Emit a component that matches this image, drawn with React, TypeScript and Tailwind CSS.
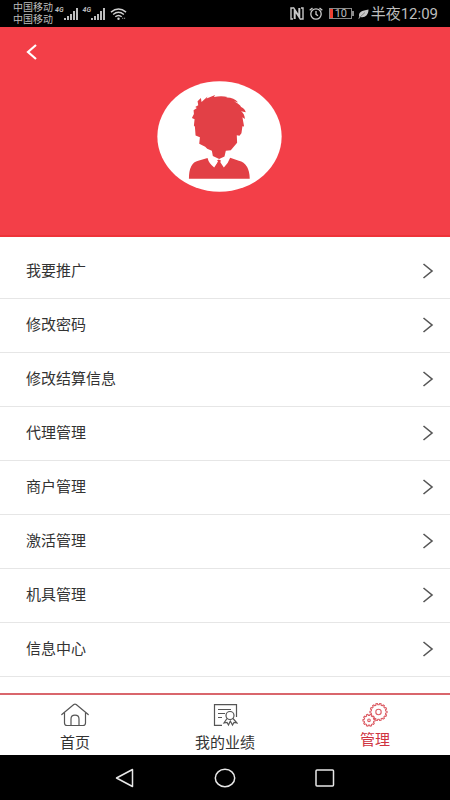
import React from "react";

const menuItems = [
  "我要推广",
  "修改密码",
  "修改结算信息",
  "代理管理",
  "商户管理",
  "激活管理",
  "机具管理",
  "信息中心",
];

function Signal() {
  return (
    <div className="flex items-start">
      <span className="text-[7px] leading-[9px] font-bold italic">4G</span>
      <svg width="15" height="16" viewBox="0 0 15 16" fill="currentColor" aria-hidden="true">
        <rect x="0" y="12" width="2" height="2" />
        <rect x="3" y="10" width="2" height="4" />
        <rect x="6" y="8" width="2" height="6" />
        <rect x="9" y="5" width="2" height="9" />
        <rect x="12" y="2" width="2" height="12" />
      </svg>
    </div>
  );
}

function WifiIcon() {
  return (
    <svg width="17" height="14" viewBox="0 0 18 14" fill="none" stroke="#d0d0d0" strokeWidth="1.5" aria-hidden="true">
      <path d="M1 5 Q9 -1.8 17 5" />
      <path d="M3.3 7.6 Q9 2.8 14.7 7.6" />
      <path d="M5.6 10 Q9 7 12.4 10" />
      <circle cx="9" cy="12" r="1.3" fill="#d0d0d0" stroke="none" />
      <path d="M13 11.5 h1 M15 11.5 h1" strokeWidth="1" />
    </svg>
  );
}

function NfcIcon() {
  return (
    <svg width="14" height="13" viewBox="0 0 14 13" fill="none" stroke="#c8c8c8" aria-hidden="true">
      <path d="M4 1 H1 V12 H3 M10 12 H13 V1 H11" strokeWidth="1.4" />
      <path d="M4.7 12 V3 L9.300 10 V1" strokeWidth="2" />
    </svg>
  );
}

function AlarmIcon() {
  return (
    <svg width="14" height="13" viewBox="0 0 14 13" fill="none" stroke="#cccccc" strokeWidth="1.3" aria-hidden="true">
      <circle cx="7" cy="7" r="5.200" />
      <path d="M7 4 V7.300 L9 8.700 M.7 3.300 L3.500 1 M10.500 1 L13.300 3.300" />
    </svg>
  );
}

function LeafIcon() {
  return (
    <svg width="11" height="10" viewBox="0 0 11 10" aria-hidden="true">
      <path d="M1.300 8 C0 3 4 1.500 10.500 .5 C10.500 6 7 9 2.500 8 L1 9.700 L.3 9.300 Z" fill="#c8c8c8" />
      <path d="M1.500 8.500 L7 3.500" stroke="#555" strokeWidth=".6" />
    </svg>
  );
}

function Avatar() {
  return (
    <svg width="125" height="111" viewBox="36 33 376 334" role="img" aria-label="头像">
      <ellipse cx="224" cy="200" rx="187" ry="166" fill="#fff" />
      <g fill="#e24046">
        <path d="M152 197 L150 171 L147 167 L149 148 L141 144 L147 132 L146 121 L156 114 L151 111 L160 106 L158 94 L168 84 L170 96 L188 80 L185 86 L211 75 L207 81 Q230 77 248 81 L243 83 Q267 82 280 98 L268 94 Q285 103 289 111 Q301 117 303 127 L289 124 Q300 132 300 147 L293 142 L298 170 L293 169 L290 190 L284 198 L276 196 L277 219 L263 235 L258 241 L243 243 L239 260 L223 268 L204 259 L201 243 L187 237 L181 231 L163 222 L165 202 Z" />
        <path d="M132 327 Q132 279 160 273 L188 265 Q192 282 208 293 L220 275 L216 273 L222 269 L229 273 L226 277 L237 293 Q251 280 256 264 L282 273 Q314 281 315 327 Z" />
        <path d="M218 278 H226 L230 292 H213 Z" />
      </g>
    </svg>
  );
}

function ChevronRight() {
  return (
    <svg width="12" height="18" viewBox="0 0 12 18" fill="none" stroke="#565656" strokeWidth="1.6" aria-hidden="true">
      <path d="M1.500 2 L10 9 L1.500 16" />
    </svg>
  );
}

function HomeIcon() {
  return (
    <svg width="28" height="24" viewBox="0 0 28 24" fill="none" stroke="#555" strokeWidth="1.2" strokeLinejoin="round" strokeLinecap="round" aria-hidden="true">
      <path d="M.8 11.500 L12.800 1.500 Q14 .7 15.200 1.500 L27.200 11.500" />
      <path d="M3.500 10 V20 Q3.500 22.500 6 22.500 H22 Q24.500 22.500 24.500 20 V10" />
      <path d="M10 22 V16 Q10 12.200 14 12.200 Q18 12.200 18 16 V22" />
    </svg>
  );
}

function CertificateIcon() {
  return (
    <svg width="26" height="24" viewBox="0 0 26 24" fill="none" stroke="#555" strokeWidth="1.2" aria-hidden="true">
      <path d="M10 22.400 H2.500 V1.600 H24.500 V14" />
      <path d="M6 6.500 H19 M6 10.500 H13 M6 14.500 H10" />
      <circle cx="18" cy="12.500" r="4" />
      <path d="M15 15.500 L12 20 L15 19.500 L16.500 22 L18.300 18 L20.500 22 L22 19.500 L25 20 L21 15.500" />
    </svg>
  );
}

function gearPath(cx: number, cy: number, r: number, depth: number, teeth: number) {
  const points: string[] = [];
  for (let i = 0; i < teeth; i++) {
    [-0.3, -0.2, 0.2, 0.3].forEach((offset, k) => {
      const angle = ((i + offset) / teeth) * Math.PI * 2;
      const radius = k === 0 || k === 3 ? r - depth : r;
      points.push(`${(cx + radius * Math.cos(angle)).toFixed(2)} ${(cy + radius * Math.sin(angle)).toFixed(2)}`);
    });
  }
  return `M${points.join("L")}Z`;
}

function GearsIcon() {
  return (
    <svg width="26" height="24" viewBox="0 0 26 24" fill="none" stroke="#dc5c64" strokeWidth="1.1" strokeLinejoin="round" aria-hidden="true">
      <path d={gearPath(16.5, 9, 8.6, 1.3, 14)} />
      <circle cx="16.500" cy="9" r="2.700" />
      <path d={gearPath(7, 17.3, 6.1, 1.2, 10)} fill="#fff" />
      <circle cx="7" cy="17.300" r="1.300" />
    </svg>
  );
}

function StatusBar() {
  return (
    <div className="flex h-[27px] items-center bg-black pr-3 pl-[13px] text-[#bdbdbd]">
      <div className="text-[10px] leading-[12px]">
        <div>中国移动</div>
        <div>中国移动</div>
      </div>
      <div className="ml-[2px] flex items-center gap-1">
        <Signal />
        <Signal />
        <WifiIcon />
      </div>
      <div className="ml-auto flex items-center">
        <NfcIcon />
        <span className="ml-[5px]"><AlarmIcon /></span>
        <div className="ml-[6px] flex items-center">
          <div className="flex h-[11px] w-[23px] items-center border border-[#8a8a8a]">
            <span className="h-full w-[3px] bg-[#f04030]" />
            <span className="ml-[2px] text-[11px] leading-[10px]">10</span>
          </div>
          <span className="h-[5px] w-[2px] bg-[#8a8a8a]" />
        </div>
        <span className="ml-[4px]"><LeafIcon /></span>
        <span className="ml-[2px] text-[15px] leading-[20px]">半夜12:09</span>
      </div>
    </div>
  );
}

export default function App() {
  return (
    <div className="flex min-h-screen flex-col bg-white font-[Roboto,'Noto_Sans_CJK_SC',sans-serif] text-[#333]">
      <StatusBar />

      <header className="flex h-[210px] flex-col items-center border-b-2 border-[#ee3339] bg-[#f33f48]">
        <button type="button" aria-label="返回" className="mt-4 ml-[25px] self-start">
          <svg width="14" height="18" viewBox="0 0 14 18" fill="none" stroke="#fff" strokeWidth="2.2">
            <path d="M11 2 L3 9 L11 16" />
          </svg>
        </button>
        <div className="mt-5 pr-3">
          <Avatar />
        </div>
      </header>

      <main className="flex-1 pt-2">
        <ul>
          {menuItems.map((label) => (
            <li key={label} className="border-b border-[#e6e6e6]">
              <a href="#" className="flex h-[53px] items-center justify-between pr-4 pb-[2px] pl-[26px] text-[15px] leading-[22px]">
                <span>{label}</span>
                <ChevronRight />
              </a>
            </li>
          ))}
        </ul>
      </main>

      <nav className="grid h-[62px] grid-cols-3 border-t-2 border-[#d9666c] text-[15px] leading-[22px]">
        <a href="#" className="flex flex-col items-center pt-2">
          <HomeIcon />
          <span className="mt-[5px]">首页</span>
        </a>
        <a href="#" className="flex flex-col items-center pt-2">
          <CertificateIcon />
          <span className="mt-[5px]">我的业绩</span>
        </a>
        <a href="#" aria-current="page" className="flex flex-col items-center pt-2 text-[#cf3340]">
          <GearsIcon />
          <span className="mt-[2px]">管理</span>
        </a>
      </nav>

      <div className="flex h-[45px] items-center justify-center gap-[78px] bg-black">
        <button type="button" aria-label="后退">
          <svg width="22" height="22" viewBox="0 0 22 22" fill="none" stroke="#e8e8e8" strokeWidth="1.5" strokeLinejoin="round">
            <path d="M2.500 11 L18.500 2.500 V19.500 Z" />
          </svg>
        </button>
        <button type="button" aria-label="主屏幕">
          <svg width="22" height="22" viewBox="0 0 22 22" fill="none" stroke="#e8e8e8" strokeWidth="1.5">
            <ellipse cx="11" cy="11" rx="9.700" ry="8.700" />
          </svg>
        </button>
        <button type="button" aria-label="最近任务">
          <svg width="22" height="22" viewBox="0 0 22 22" fill="none" stroke="#e8e8e8" strokeWidth="1.5">
            <rect x="2" y="3" width="17.500" height="16" rx="1" />
          </svg>
        </button>
      </div>
    </div>
  );
}
